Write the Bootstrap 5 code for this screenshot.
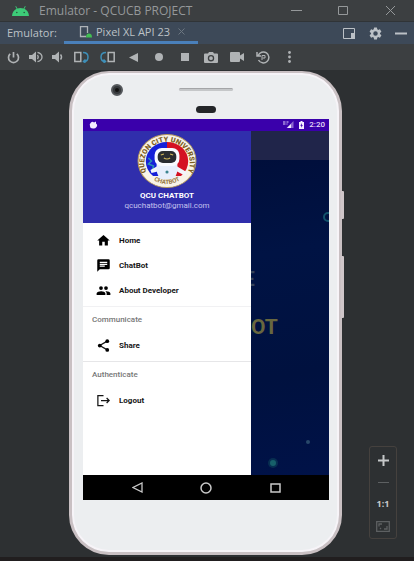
<!DOCTYPE html>
<html lang="en">
<head>
<meta charset="utf-8">
<meta name="viewport" content="width=device-width, initial-scale=1">
<title>Emulator - QCUCB PROJECT</title>
<link href="https://cdn.jsdelivr.net/npm/bootstrap@5.3.0/dist/css/bootstrap.min.css" rel="stylesheet">
<style>
body{background:#2d3032;color:#b4b8bb;font-family:"Open Sans","Noto Sans",sans-serif;font-size:11px;line-height:16px}
svg{display:block;flex:none}
button{background:none;border:0;padding:0;color:inherit;display:flex;align-items:center;justify-content:center}
a{color:inherit;text-decoration:none}
.title-strip{height:22px;background:#3c3f41;border-bottom:1px solid #303437;color:#95989a;padding-left:12px}
.title-text{font-size:12px;margin-left:10px}
.win-btn{width:47px;height:20px}
.tab-strip{height:22px;background:#3d4958;padding-left:7px;color:#bcc1c6}
.tab-label{width:57px}
.device-tab{border-bottom:3px solid #4a80ba;width:134px;padding-left:15px;gap:4px}
.tool-strip{height:26px;background:#3c3f41;color:#b0b3b5}
.tool{width:26px;height:26px}
.tool-slim{width:20px}
.tool-mid{width:22px}
.stage{background:#2d3032;padding:1px 3px 2px 0}
.phone{width:273px;background:#eceef0;border:3px solid #c9c0c3;border-top-width:2px;border-radius:40px;padding:0 10px 52px 11px;box-shadow:inset 0 0 0 2px #f7f4f8}
.phone-top{height:46px}
.cam{width:12px;height:12px;border-radius:50%;background:#35383b;border:2px solid #55585c;left:28px;top:11px}
.cam::after{content:"";position:absolute;left:2px;top:2px;width:4px;height:4px;border-radius:50%;background:#111}
.ear{width:54px;height:3px;border-radius:2px;background:#c5c7c9;border-top:1px solid #a4a5a7;left:96px;top:15px}
.sensor{width:20px;height:7px;border-radius:4px;background:#242629;left:113px;top:33px}
.side-key{width:3px;right:-5px;background:#cfc6c9;border-radius:1px}
.key-a{top:118px;height:28px}
.key-b{top:183px;height:62px}
.os-bar{height:12px;background:#3a00ab;color:#e6dcf8;font:500 8px/12px Roboto,sans-serif;padding:0 4px 0 6px}
.screen-body{height:344px}
.drawer{width:168px;background:#fff;color:#161616;font:700 8px/12px Roboto,sans-serif}
.drawer-head{height:92px;background:#302eac;color:#fff;padding-top:2px}
.acct{font-weight:700;margin-top:2px;line-height:10px}
.mail{font-weight:400;font-size:8px;line-height:10px;color:#c4c2ee}
.menu-group{padding-bottom:3px;border-bottom:1px solid #e6e6e8}
.menu-group:last-child{border:0}
.menu-first{padding-top:5px;border-color:#f1f1f3}
.menu-row{height:25px;padding-left:13px;gap:8px}
.menu-head{height:26px;line-height:26px;padding-left:9px;color:#777;font-size:8px;font-weight:500}
.behind{background:linear-gradient(170deg,#000d38,#001344 35%,#00113f 70%,#001248);font:700 21px/26px Roboto,sans-serif;color:#68673f}
.behind-bar{height:29px;background:#20254a}
.line-a{margin-top:106px;color:#33435a;margin-left:-8px}
.line-b{margin-top:22px;margin-left:0}
.glow{left:0;top:0;width:100%;height:100%}
.nav-keys{height:25px;background:#000;color:#c9c9c9}
.nav-key{width:69px;height:25px}
.zoom-box{right:17px;bottom:18px;width:28px;height:93px;border:1px solid #45413e;border-radius:3px;padding:2px 0}
.zoom-box button{height:22px;width:100%;font-weight:700;font-size:9px;color:#c6c8c9}
.zoom-box .dim{color:#5d6062}
.foot-strip{height:6px;background:#211e1f}
</style>
</head>
<body class="d-flex flex-column min-vh-100">
<header>
<div class="title-strip d-flex align-items-center">
<svg width="17" height="10" viewBox="0 0 17 10"><path d="M0 10C.2 6.500 2 4 4.600 2.800L3.300.5 4 .1l1.400 2.400q3-1 6.200 0L13 .1l.7.4-1.300 2.300C15 4 16.800 6.500 17 10z" fill="#3dcb78"/><circle cx="4.800" cy="6.500" r=".8" fill="#28563d"/><circle cx="12.200" cy="6.500" r=".8" fill="#28563d"/></svg>
<span class="title-text text-nowrap">Emulator - QCUCB PROJECT</span>
<div class="d-flex ms-auto">
<button class="win-btn" aria-label="Minimize"><svg width="11" height="11"><path d="M0 5.500h11" stroke="currentColor"/></svg></button>
<button class="win-btn" aria-label="Maximize"><svg width="11" height="11" fill="none" stroke="currentColor"><path d="M.5 1.500h9v8h-9z"/></svg></button>
<button class="win-btn" aria-label="Close"><svg width="11" height="11" stroke="currentColor"><path d="M1 1l9 9M10 1l-9 9"/></svg></button>
</div>
</div>
<div class="tab-strip d-flex align-items-stretch">
<span class="tab-label align-self-center">Emulator:</span>
<div class="device-tab d-flex align-items-center text-nowrap">
<svg width="13" height="12" viewBox="0 0 13 12"><path d="M7 10.500H1.500V.7h7V7" fill="none" stroke="#aeb3b7" stroke-width="1.300"/><path d="M7 11.500q0-4 3-4t3 4z" fill="#42c052"/></svg>
<a href="#" class="device-link">Pixel XL API 23</a>
<button class="ms-1" aria-label="Close tab"><svg width="7" height="7" stroke="#6c7680"><path d="M.5.5l6 6M6.500.5l-6 6"/></svg></button>
</div>
<div class="d-flex ms-auto align-items-center">
<button class="tool" aria-label="Dock mode"><svg width="12" height="11" viewBox="0 0 12 11"><path d="M.5.5h11v10H.5z" fill="none" stroke="currentColor"/><path d="M8 5h4v6H8z" fill="currentColor"/></svg></button>
<button class="tool" aria-label="Settings"><svg width="15" height="15" viewBox="0 0 24 24"><path fill="currentColor" d="M19.140 12.940c.04-.3.06-.61.06-.94s-.02-.64-.07-.94l2.030-1.580a.49.49 0 0 0 .12-.61l-1.920-3.320a.49.49 0 0 0-.59-.22l-2.390.96a7 7 0 0 0-1.620-.94l-.36-2.540a.48.48 0 0 0-.48-.41h-3.840a.48.48 0 0 0-.47.41l-.36 2.540c-.59.24-1.130.57-1.620.94l-2.390-.96a.48.48 0 0 0-.59.22L2.740 8.870a.48.48 0 0 0 .12.610l2.030 1.580a6 6 0 0 0 0 1.880l-2.030 1.580a.49.49 0 0 0-.12.610l1.920 3.320c.12.22.37.29.59.22l2.390-.96c.5.38 1.030.7 1.620.94l.36 2.540c.05.24.24.41.48.41h3.840c.24 0 .44-.17.47-.41l.36-2.540a7 7 0 0 0 1.620-.94l2.390.96c.22.08.47 0 .59-.22l1.920-3.320a.48.48 0 0 0-.12-.61zM12 15.600a3.600 3.600 0 1 1 0-7.200 3.600 3.600 0 0 1 0 7.200z"/></svg></button>
<button class="tool" aria-label="Hide"><svg width="12" height="3"><path d="M0 1.500h12" stroke="currentColor" stroke-width="2"/></svg></button>
</div>
</div>
<div class="tool-strip d-flex align-items-center">
<button class="tool" aria-label="Power"><svg width="13" height="13" viewBox="0 0 13 13" fill="none" stroke="currentColor" stroke-width="1.700"><path d="M6.500 1v5.500M3.200 2.800a5 5 0 1 0 6.600 0"/></svg></button>
<button class="tool tool-slim" aria-label="Volume up"><svg width="14" height="12" viewBox="0 0 14 12"><path d="M0 4h3l4-3.500v11L3 8H0z" fill="currentColor"/><path d="M8.500 4q1.500 2 0 4M8.500 1.300q4.500 1.200 4.500 4.700t-4.500 4.700" fill="none" stroke="currentColor" stroke-width="1.300"/></svg></button>
<button class="tool tool-mid" aria-label="Volume down"><svg width="11" height="12" viewBox="0 0 11 12"><path d="M0 4h3l4-3.500v11L3 8H0z" fill="currentColor"/><path d="M8.500 3.500q2 2.500 0 5" fill="none" stroke="currentColor" stroke-width="1.500"/></svg></button>
<button class="tool" aria-label="Rotate left"><svg width="15" height="12" viewBox="0 0 15 12" fill="none" stroke-width="1.500"><path d="M.8 1.500h6v9h-6z" stroke="currentColor"/><path d="M9 1.500q5 0 5 4.500t-4 4.500M11.500 8.500l-2 2 2 1.500" stroke="#3e8fb8"/></svg></button>
<button class="tool" aria-label="Rotate right"><svg width="15" height="12" viewBox="0 0 15 12" fill="none" stroke-width="1.500"><path d="M8.200 1.500h6v9h-6z" stroke="currentColor"/><path d="M6 1.500Q1 1.500 1 6t4 4.500M3.500 8.500l2 2-2 1.500" stroke="#3e8fb8"/></svg></button>
<button class="tool" aria-label="Back"><svg width="9" height="9"><path d="M9 0v9L0 4.500z" fill="currentColor"/></svg></button>
<button class="tool" aria-label="Home"><svg width="8" height="8"><circle cx="4" cy="4" r="4" fill="currentColor"/></svg></button>
<button class="tool" aria-label="Overview"><svg width="8" height="8"><path d="M0 0h8v8H0z" fill="currentColor"/></svg></button>
<button class="tool" aria-label="Screenshot"><svg width="14" height="11" viewBox="0 0 14 11"><path fill="currentColor" fill-rule="evenodd" d="M1 1.500h3L5 0h4l1 1.500h3q1 0 1 1V10q0 1-1 1H1q-1 0-1-1V2.500q0-1 1-1zM7 3a3.200 3.200 0 1 0 0 6.400A3.200 3.200 0 0 0 7 3zm0 1.300a1.900 1.900 0 1 1 0 3.800 1.900 1.900 0 0 1 0-3.800z"/></svg></button>
<button class="tool" aria-label="Record"><svg width="14" height="10" viewBox="0 0 14 10"><path fill="currentColor" d="M0 1q0-1 1-1h8q1 0 1 1v2.500L14 1v8l-4-2.500V9q0 1-1 1H1Q0 10 0 9z"/></svg></button>
<button class="tool" aria-label="Snapshots"><svg width="14" height="13" viewBox="0 0 14 13" fill="none" stroke="currentColor" stroke-width="1.500"><path d="M2.200 4.500A5.500 5.500 0 1 1 2.500 9M1 1v4h4"/><path d="M6 9V4.500h3V7H6.500" stroke-width="1"/></svg></button>
<button class="tool" aria-label="More"><svg width="3" height="12" fill="currentColor"><circle cx="1.500" cy="1.500" r="1.400"/><circle cx="1.500" cy="6" r="1.400"/><circle cx="1.500" cy="10.500" r="1.400"/></svg></button>
</div>
</header>

<main class="stage position-relative flex-grow-1 d-flex justify-content-center align-items-start">
<section class="phone position-relative" aria-label="Phone">
<span class="side-key key-a position-absolute"></span><span class="side-key key-b position-absolute"></span>
<div class="phone-top position-relative">
<span class="cam position-absolute"></span><span class="ear position-absolute"></span><span class="sensor position-absolute"></span>
</div>
<div class="os-bar d-flex align-items-center">
<svg width="9" height="8" viewBox="0 0 9 8"><path d="M2 1.500Q3.500 0 5 1.500L7 .5v2Q9 4 7.500 6 6 8 4 7.500 1 7.500 1 5 0 3 2 1.500z" fill="#f4ecff"/></svg>
<svg class="ms-auto me-1" width="11" height="8" viewBox="0 0 11 8"><path d="M10.500 0v7H3.500z" fill="#8d68d0"/><path d="M8 3v4H4z" fill="#f1eaff"/><path d="M0 1h2.500M0 3h2.500M3.500 1h2M3.500 3h1" stroke="#e0d2fa"/></svg>
<svg class="me-1" width="7" height="8" viewBox="0 0 7 8"><path d="M1 1h1.500V0h2v1H6v7H1z" fill="#f4ecff"/><path d="M3.700 2L2.300 4.800h1V6.800L4.800 4h-1z" fill="#3a00ab"/></svg>
<span>2:20</span>
</div>
<div class="screen-body d-flex">
<nav class="drawer flex-shrink-0">
<div class="drawer-head d-flex flex-column align-items-center">
<svg width="60" height="56" viewBox="0 0 58 56" preserveAspectRatio="none" role="img" aria-label="Quezon City University Chatbot">
<defs><path id="arcTop" d="M10 41a22 21.500 0 1 1 38 0"/><path id="arcLow" d="M12 44q17 14 34 0"/></defs>
<ellipse cx="29" cy="28" rx="28" ry="26.500" fill="#f8f3e8" stroke="#b69a5e"/>
<path d="M29 9a20.500 19 0 0 0-20.500 19q0 9 7 15H29z" fill="#1620d8"/><path d="M29 9a20.500 19 0 0 1 20.500 19q0 9-7 15H29z" fill="#d41222"/>
<text font-family="Roboto,sans-serif" font-weight="900" font-size="7" fill="#7d5e1c"><textPath href="#arcTop" startOffset="50%" text-anchor="middle">QUEZON CITY UNIVERSITY</textPath></text>
<path d="M11 25l3 3-3 3 5 2-1 4" stroke="#2b8fb5" stroke-width="1.500" fill="none"/>
<path d="M20 33l-7 4 1 3 8-2zM38 33l10 6-1 4-11-6z" fill="#f2f5fb"/>
<path d="M19 31h20q1 11-4 15H23q-5-4-4-15z" fill="#e8effc"/>
<rect x="17" y="15" width="24" height="18" rx="7" fill="#fafbff"/><rect x="20" y="18" width="18" height="12" rx="5" fill="#2b2d31"/>
<path d="M23 22l3-1M35 22l-3-1M26 25q3 2 6 0" stroke="#d2b95c" stroke-width="1.200" fill="none"/><circle cx="29" cy="39" r="1.500" fill="#3c8590"/>
<text font-family="Roboto,sans-serif" font-size="6" fill="#94733a"><textPath href="#arcLow" startOffset="50%" text-anchor="middle">CHATBOT</textPath></text>
</svg>
<div class="acct">QCU CHATBOT</div>
<div class="mail">qcuchatbot@gmail.com</div>
</div>
<div class="menu-group menu-first">
<a href="#" class="menu-row d-flex align-items-center"><svg width="15" height="15" viewBox="0 0 24 24"><path d="M10 20v-6h4v6h5v-8h3L12 3 2 12h3v8z"/></svg>Home</a>
<a href="#" class="menu-row d-flex align-items-center"><svg width="15" height="15" viewBox="0 0 24 24"><path d="M20 2H4a2 2 0 0 0-2 2v18l4-4h14a2 2 0 0 0 2-2V4a2 2 0 0 0-2-2zM6 6h12v2H6zm8 8H6v-2h8zm4-3H6V9h12z"/></svg>ChatBot</a>
<a href="#" class="menu-row d-flex align-items-center"><svg width="15" height="15" viewBox="0 0 24 24"><path d="M16 11a3 3 0 1 0 0-6 3 3 0 0 0 0 6zm-8 0a3 3 0 1 0 0-6 3 3 0 0 0 0 6zm0 2c-2.330 0-7 1.170-7 3.500V19h14v-2.500C15 14.170 10.330 13 8 13zm8 0-.97.05A4.220 4.220 0 0 1 17 16.500V19h6v-2.500c0-2.330-4.670-3.500-7-3.500z"/></svg>About Developer</a>
</div>
<div class="menu-group">
<div class="menu-head">Communicate</div>
<a href="#" class="menu-row d-flex align-items-center"><svg width="15" height="15" viewBox="0 0 24 24"><path d="M18 5L6 12l12 7" fill="none" stroke="#161616" stroke-width="2"/><circle cx="18" cy="5" r="3"/><circle cx="6" cy="12" r="3"/><circle cx="18" cy="19" r="3"/></svg>Share</a>
</div>
<div class="menu-group">
<div class="menu-head">Authenticate</div>
<a href="#" class="menu-row d-flex align-items-center"><svg width="15" height="15" viewBox="0 0 24 24" fill="none" stroke="#161616" stroke-width="2"><path d="M12 4H3v16h9M8 12h13M17 8l4 4-4 4"/></svg>Logout</a>
</div>
</nav>
<div class="behind position-relative flex-grow-1 overflow-hidden">
<svg class="glow position-absolute" viewBox="0 0 78 344" preserveAspectRatio="none"><circle cx="77" cy="86" r="4" fill="none" stroke="#11536c" stroke-width="2"/><circle cx="22" cy="332" r="5" fill="#0b4158" opacity=".6"/><circle cx="22" cy="332" r="3" fill="#17606a"/><circle cx="57" cy="311" r="2" fill="#28486a"/></svg>
<div class="behind-bar position-relative"></div>
<div class="line-a">E</div>
<div class="line-b">OT</div>
</div>
</div>
<div class="nav-keys d-flex align-items-center justify-content-center">
<button class="nav-key" aria-label="Back"><svg width="11" height="11" fill="none" stroke="currentColor" stroke-width="1.300"><path d="M10 1v9L1 5.500z"/></svg></button>
<button class="nav-key" aria-label="Home"><svg width="12" height="12" fill="none" stroke="currentColor" stroke-width="1.500"><circle cx="6" cy="6" r="5"/></svg></button>
<button class="nav-key" aria-label="Overview"><svg width="11" height="10" fill="none" stroke="currentColor" stroke-width="1.500"><path d="M1 1h9v8H1z"/></svg></button>
</div>
</section>
<div class="zoom-box position-absolute">
<button aria-label="Zoom in"><svg width="11" height="11" stroke="currentColor" stroke-width="2"><path d="M0 5.500h11M5.500 0v11"/></svg></button>
<button class="dim" aria-label="Zoom out"><svg width="11" height="3"><path d="M0 1.500h11" stroke="currentColor"/></svg></button>
<button>1:1</button>
<button class="dim" aria-label="Fit to window"><svg width="14" height="11" fill="none" stroke="currentColor" stroke-width="1.300"><path d="M.7.7h12.600v9.600H.7zM3 5.500V3h3M11 5v3H8M4 8l1-1"/></svg></button>
</div>
</main>
<footer class="foot-strip"></footer>
</body>
</html>
